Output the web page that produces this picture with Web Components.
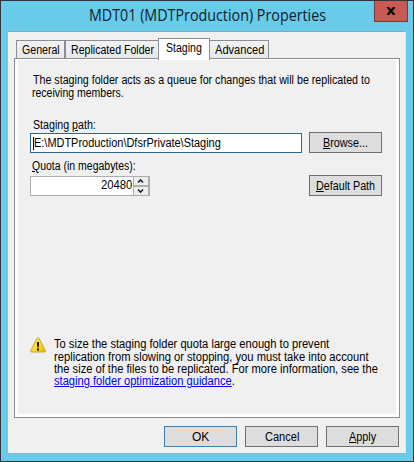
<!DOCTYPE html>
<html lang="en"><head><meta charset="utf-8"><title>MDT01 (MDTProduction) Properties</title>
<style>html,body{margin:0;overflow:hidden}body{width:414px;height:462px}</style></head><body>
<properties-window></properties-window>
<script>
// Single line of text, condensed or widened to the width given in "w".
class FitText extends HTMLElement{
  connectedCallback(){
    if(this.shadowRoot)return;
    this.attachShadow({mode:'open'}).innerHTML=`<style>:host{display:block;flex:none;height:14px;line-height:14px;white-space:nowrap}span{display:inline-block;transform-origin:0 0;white-space:nowrap}</style><span><slot></slot></span>`;
    const s=this.shadowRoot.querySelector('span'),w=+this.getAttribute('w');
    this.style.width=w+'px';
    s.style.transform=`scaleX(${w/s.offsetWidth})`;
  }
}
class DialogButton extends HTMLElement{
  connectedCallback(){
    if(this.shadowRoot)return;
    this.attachShadow({mode:'open'}).innerHTML=`<style>:host{display:flex;flex:none;box-sizing:border-box;width:73px;height:21px;border:1px solid #707070;background:#ddd;justify-content:center;padding-top:3px}:host([primary]){border-color:#3c7fb1}</style><slot></slot>`;
  }
}
class TabItem extends HTMLElement{
  connectedCallback(){
    if(this.shadowRoot)return;
    this.style.width=this.getAttribute('width')+'px';
    this.attachShadow({mode:'open'}).innerHTML=`<style>:host{display:flex;flex:none;box-sizing:border-box;height:19px;border:1px solid #8b8d99;background:linear-gradient(#f1f1f1,#e8e8e8);justify-content:center;padding-top:2px}:host([joined]){border-right:0}:host([after]){border-left:0}:host([active]){height:22px;margin-bottom:-1px;background:#fff;border-bottom:0;z-index:1;padding-top:2px}</style><slot></slot>`;
  }
}
class NumberSpin extends HTMLElement{
  connectedCallback(){
    if(this.shadowRoot)return;
    this.attachShadow({mode:'open'}).innerHTML=`<style>:host{display:flex;box-sizing:border-box;width:120px;height:20px;border:1px solid #abadb3;background:#fff}.v{flex:1;display:flex;justify-content:flex-end;padding:1px 1px 0 0}.b{width:16px;background:#abadb3;box-sizing:border-box;padding:0 1px 0 1px;display:grid;gap:2px;grid-template-rows:8px 8px}svg{display:block;background:#eee;width:14px;height:8px}path{fill:none;stroke:#222;stroke-width:1.6}</style><div class="v"><slot></slot></div><div class="b"><svg viewBox="0 0 14 8"><path d="M4 5.500L6.500 3L9 5.500"/></svg><svg viewBox="0 0 14 8"><path d="M4 2.500L6.500 5L9 2.500"/></svg></div>`;
  }
}
class WarningIcon extends HTMLElement{
  connectedCallback(){
    if(this.shadowRoot)return;
    this.attachShadow({mode:'open'}).innerHTML=`<style>:host{display:block;flex:none;width:16px;height:16px}svg{display:block}</style><svg width="16" height="16" viewBox="0 0 16 16"><defs><linearGradient id="g" x2="1" y2="1"><stop offset="0" stop-color="#fff27a"/><stop offset=".55" stop-color="#fbd92c"/><stop offset="1" stop-color="#edb800"/></linearGradient></defs><path d="M8 .8Q8.7 .8 9.1 1.6L15.3 13.6Q15.7 15 14.6 15H1.4Q.3 15 .7 13.6L6.9 1.6Q7.3 .8 8 .8Z" fill="url(#g)" stroke="#c79a1c" stroke-width=".9"/><path d="M7 5h2v2.6L8.6 10.5H7.4L7 7.600ZM7 11.500h2v2H7Z" fill="#111"/></svg>`;
  }
}
class PropertiesWindow extends HTMLElement{
  connectedCallback(){
    this.attachShadow({mode:'open'}).innerHTML=`<style>
:host{display:flex;flex-direction:column;box-sizing:border-box;width:414px;height:462px;border:1px solid #30353c;background:#68cbea;padding:0 7px 7px;font:12px "Liberation Sans",sans-serif;color:#000}
header{height:30px;flex:none;display:flex;position:relative;padding:4px 0 0 81px;box-sizing:border-box;font:15.5px "Open Sans","Noto Sans",sans-serif;color:#14202a}
header fit-text{height:20px;line-height:20px}
.close{position:absolute;right:-2px;top:0;width:34px;height:21px;box-sizing:border-box;border:1px solid #713b3e;border-top:0;background:#c75b54;display:flex;align-items:center;justify-content:center}
main{flex:1;background:#f0f0f0;box-sizing:border-box;border-top:1px solid #7faabd;border-bottom:1px solid #8ab2c2;border-right:1px solid #dbe9ee;padding:6px 6px 0}
nav{display:flex;align-items:flex-end;height:21px;padding-left:2px;box-sizing:border-box;position:relative}
section{border:1px solid #8b8d99;width:386px;height:360px;box-sizing:border-box;background:#fff;padding:1px 3px 3px;margin-top:-1px}
.in{background:#f0f0f0;height:354px;box-sizing:border-box;padding:13px 0 0 12px;display:flex;flex-direction:column}
.row{display:flex;justify-content:space-between;width:352px}
.field{box-sizing:border-box;width:272px;height:20px;border:1px solid #2b6595;background:#fff;display:flex;padding:2px 0 0 2px;margin-top:1px}
.caret{width:1px;height:13px;background:#000;margin-top:1px;flex:none}
.warn{display:flex;gap:8px;margin-top:141px}
.warn fit-text{height:12px;line-height:12px}
u{text-decoration-thickness:1px;text-underline-offset:1px}
a{color:#0000f0;text-underline-offset:1px;text-decoration-thickness:1px}
footer{display:flex;justify-content:flex-end;gap:8px;margin-top:8px;width:385px}
</style>
<header><fit-text w="237">MDT01 (MDTProduction) Properties</fit-text><div class="close"><svg width="10" height="8" viewBox="0 0 10 8"><path d="M1.500 0L8.500 8M8.500 0L1.500 8" stroke="#0b0b0b" stroke-width="2.300"/></svg></div></header>
<main><nav><tab-item width="49"><fit-text w="38">General</fit-text></tab-item><tab-item width="93" joined><fit-text w="83">Replicated Folder</fit-text></tab-item><tab-item width="52" active><fit-text w="36">Staging</fit-text></tab-item><tab-item width="59" after><fit-text w="49">Advanced</fit-text></tab-item></nav>
<section><div class="in">
<fit-text w="337" style="margin-left:3px">The staging folder acts as a queue for changes that will be replicated to</fit-text>
<fit-text w="92" style="margin:-1px 0 0 2px">receiving members.</fit-text>
<fit-text w="63" style="margin:18px 0 0 3px">Staging <u>p</u>ath:</fit-text>
<div class="row"><div class="field"><div class="caret"></div><fit-text w="187">E:\\MDTProduction\\DfsrPrivate\\Staging</fit-text></div><dialog-button><fit-text w="45"><u>B</u>rowse...</fit-text></dialog-button></div>
<fit-text w="104" style="margin:6px 0 0 2px"><u>Q</u>uota (in megabytes):</fit-text>
<div class="row" style="margin-top:2px"><number-spin style="margin-top:1px"><fit-text w="31">20480</fit-text></number-spin><dialog-button><fit-text w="59"><u>D</u>efault Path</fit-text></dialog-button></div>
<div class="warn"><warning-icon></warning-icon><div>
<fit-text w="275" style="margin-top:1px">To size the staging folder quota large enough to prevent</fit-text>
<fit-text w="315" style="margin-top:1px">replication from slowing or stopping, you must take into account</fit-text>
<fit-text w="324">the size of the files to be replicated. For more information, see the</fit-text>
<fit-text w="181"><a href="#">staging folder optimization guidance</a>.</fit-text>
</div></div></div></section>
<footer><dialog-button primary><fit-text w="17">OK</fit-text></dialog-button><dialog-button><fit-text w="34">Cancel</fit-text></dialog-button><dialog-button><fit-text w="27"><u>A</u>pply</fit-text></dialog-button></footer></main>`;
  }
}
customElements.define('fit-text',FitText);
customElements.define('dialog-button',DialogButton);
customElements.define('tab-item',TabItem);
customElements.define('number-spin',NumberSpin);
customElements.define('warning-icon',WarningIcon);
customElements.define('properties-window',PropertiesWindow);
</script></body></html>
